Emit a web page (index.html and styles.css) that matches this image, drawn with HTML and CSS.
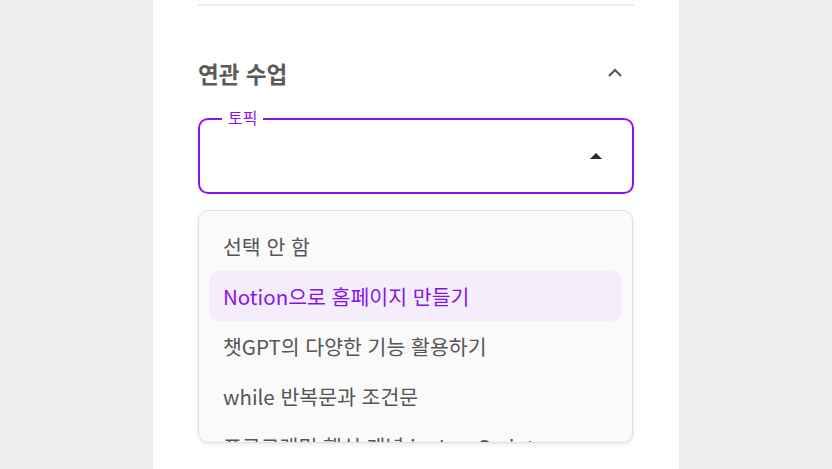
FILE: index.html
```html
<!DOCTYPE html>
<html lang="ko">
<head>
    <meta charset="UTF-8">
    <title>연관 수업</title>
    <link rel="stylesheet" href="styles.css">
</head>
<body>
<div class="panel">
    <div class="divider"></div>
    <div class="section-head">
        <h2 class="section-title">연관 수업</h2>
        <svg class="chevron" width="20" height="20" viewBox="0 0 20 20">
            <path d="M4 13 L10 7 L16 13" fill="none" stroke="#555555" stroke-width="2"/>
        </svg>
    </div>
    <div class="field">
        <span class="field-label">토픽</span>
        <span class="field-arrow"></span>
    </div>
    <ul class="menu">
        <li class="menu-item">선택 안 함</li>
        <li class="menu-item active">Notion으로 홈페이지 만들기</li>
        <li class="menu-item">챗GPT의 다양한 기능 활용하기</li>
        <li class="menu-item">while 반복문과 조건문</li>
        <li class="menu-item">프로그래밍 핵심 개념 in JavaScript</li>
    </ul>
</div>
</body>
</html>
```

FILE: styles.css
```css
html, body{
    margin: 0;
    height: 100%;
}
body{
    background-color: #eeeef0;
    font-family: "Noto Sans CJK KR", "Noto Sans", sans-serif;
    color: #555555;
}
.panel{
    width: 436px;
    min-height: 100%;
    margin-left: 153px;
    padding: 4px 45px 0;
    background-color: #ffffff;
}
.divider{
    height: 2px;
    background-color: #ececee;
}
.section-head{
    display: flex;
    align-items: center;
    justify-content: space-between;
    height: 48px;
    margin-top: 43px;
}
.section-title{
    margin: 0;
    font-size: 22.5px;
    font-weight: 700;
    color: #5a5a5a;
}
.chevron{
    margin-right: 9px;
}
.field{
    position: relative;
    display: flex;
    align-items: center;
    justify-content: flex-end;
    height: 72px;
    margin-top: 21px;
    border: 2px solid #8c12f2;
    border-radius: 10px;
}
.field-label{
    position: absolute;
    left: 22px;
    top: -14px;
    padding: 0 6px;
    background-color: #ffffff;
    font-size: 16px;
    line-height: 22px;
    color: #8c12f2;
}
.field-arrow{
    width: 0;
    height: 0;
    margin-right: 30px;
    border-left: 6px solid transparent;
    border-right: 6px solid transparent;
    border-bottom: 6px solid #2b2b2b;
}
.menu{
    list-style: none;
    margin: 16px 1px 0 0;
    padding: 10px 10px 0;
    height: 221px;
    overflow: hidden;
    border: 1px solid #e0e0e4;
    border-radius: 10px;
    background-color: #fafafa;
    box-shadow: 0 2px 4px rgba(0, 0, 0, 0.08);
}
.menu-item{
    height: 50px;
    padding-left: 14px;
    line-height: 50px;
    font-size: 20.5px;
    color: #555555;
    border-radius: 10px;
    white-space: nowrap;
}
.menu-item.active{
    background-color: #f3edfc;
    color: #8a12ec;
}
```
